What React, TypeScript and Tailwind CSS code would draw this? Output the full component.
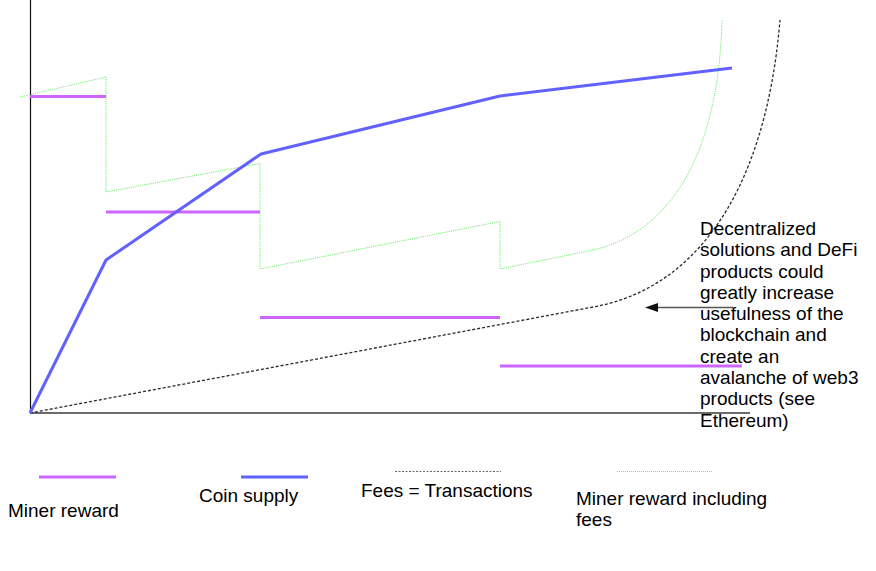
import React from "react";

// Chart canvas: lines are drawn in an SVG, labels are real text placed on the same canvas.
const PURPLE = "#cc66ff";
const BLUE = "#6161ff";
const GREEN = "#6ef06e";
const DASH = "#2a2a2a";

const rewardSteps = [
  { x1: 30, x2: 106, y: 96.5 },
  { x1: 106, x2: 260, y: 212 },
  { x1: 260, x2: 500, y: 317.5 },
  { x1: 500, x2: 742, y: 366 },
];

const annotation = [
  "Decentralized",
  "solutions and DeFi",
  "products could",
  "greatly increase",
  "usefulness of the",
  "blockchain and",
  "create an",
  "avalanche of web3",
  "products (see",
  "Ethereum)",
];

const Chart: React.FC = () => (
  <svg className="absolute inset-0" width={876} height={571} viewBox="0 0 876 571">
    {/* axes */}
    <line x1={30.5} y1={0} x2={30.5} y2={413} stroke="#111" strokeWidth={1.2} />
    <line x1={30} y1={413} x2={750} y2={413} stroke="#6b6b6b" strokeWidth={1.8} />

    {/* miner reward incl. fees */}
    <path
      d="M20,97 L106,77 L106,192 L260,163.5 L260,269 L500,221.5 L500,269 L593,250 C660,235 718,170 722,20"
      fill="none"
      stroke={GREEN}
      strokeWidth={1}
      strokeDasharray="1.2 1"
    />

    {/* fees = transactions */}
    <path
      d="M30,413 L593,307 C690,290 765,200 780,20"
      fill="none"
      stroke={DASH}
      strokeWidth={1.3}
      strokeDasharray="3 2"
    />

    {/* miner reward */}
    {rewardSteps.map((s, idx) => (
      <line key={idx} x1={s.x1} y1={s.y} x2={s.x2} y2={s.y} stroke={PURPLE} strokeWidth={3} />
    ))}

    {/* coin supply */}
    <polyline
      points="30,413 106,260 261,154 500,96 732,68"
      fill="none"
      stroke={BLUE}
      strokeWidth={3}
      strokeLinejoin="round"
    />

    {/* arrow to the fees curve */}
    <line x1={656} y1={307.5} x2={733} y2={307.5} stroke="#555" strokeWidth={1.4} />
    <polygon points="645,307.5 658,303 658,312" fill="#111" />

    {/* legend swatches */}
    <line x1={39} y1={477} x2={116} y2={477} stroke={PURPLE} strokeWidth={3} />
    <line x1={241} y1={477} x2={308} y2={477} stroke={BLUE} strokeWidth={3} />
    <line x1={395} y1={471.5} x2={501} y2={471.5} stroke="#666" strokeWidth={1} strokeDasharray="2 1.5" />
    <line x1={617} y1={471.5} x2={713} y2={471.5} stroke={GREEN} strokeWidth={1} strokeDasharray="1 1" />
  </svg>
);

export default function App() {
  return (
    <div
      className="relative w-[876px] h-[571px] overflow-hidden bg-white text-[19px] leading-[21.3px] text-black"
      style={{ fontFamily: '"Liberation Sans", Arial, sans-serif' }}
    >
      <Chart />

      <div className="absolute left-[700px] top-[218px] whitespace-nowrap">
        {annotation.map((line) => (
          <div key={line}>{line}</div>
        ))}
      </div>

      {/* legend labels */}
      <div className="absolute left-[8px] top-[500px] whitespace-nowrap">Miner reward</div>
      <div className="absolute left-[199px] top-[485px] whitespace-nowrap">Coin supply</div>
      <div className="absolute left-[361px] top-[480px] whitespace-nowrap">Fees = Transactions</div>
      <div className="absolute left-[576px] top-[489px] whitespace-nowrap leading-[20.5px]">
        <div>Miner reward including</div>
        <div>fees</div>
      </div>
    </div>
  );
}
